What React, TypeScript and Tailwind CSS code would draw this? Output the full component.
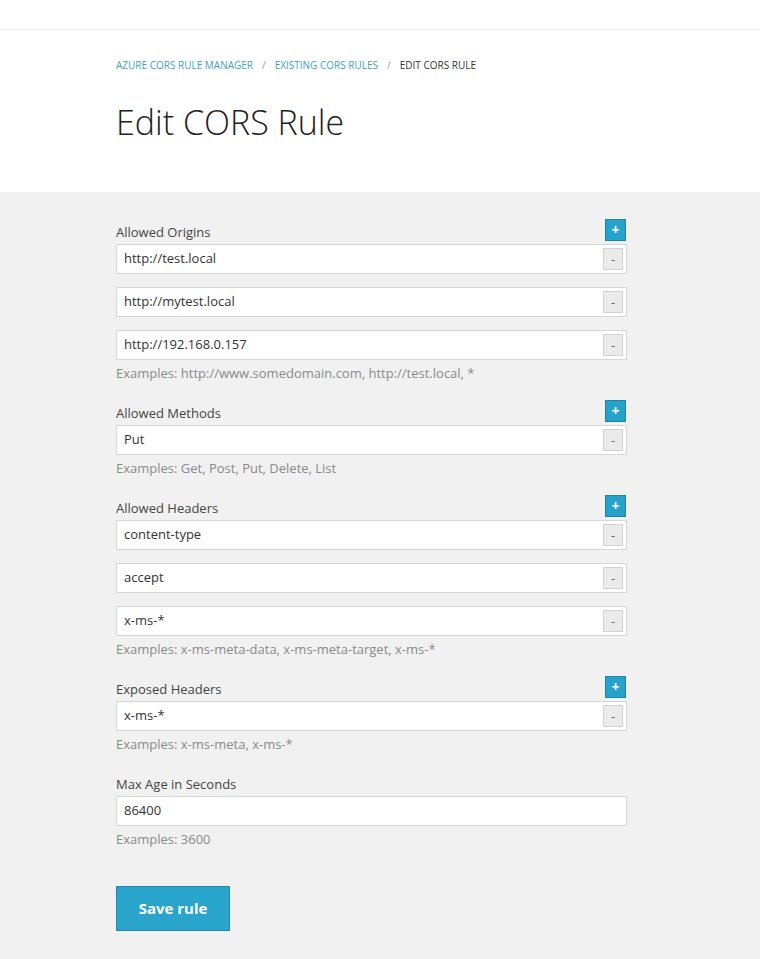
import React from 'react';

type Group = {
  label: string;
  values: string[];
  help: string;
  multi: boolean;
};

const groups: Group[] = [
  {
    label: 'Allowed Origins',
    values: ['http://test.local', 'http://mytest.local', 'http://192.168.0.157'],
    help: 'Examples: http://www.somedomain.com, http://test.local, *',
    multi: true,
  },
  {
    label: 'Allowed Methods',
    values: ['Put'],
    help: 'Examples: Get, Post, Put, Delete, List',
    multi: true,
  },
  {
    label: 'Allowed Headers',
    values: ['content-type', 'accept', 'x-ms-*'],
    help: 'Examples: x-ms-meta-data, x-ms-meta-target, x-ms-*',
    multi: true,
  },
  {
    label: 'Exposed Headers',
    values: ['x-ms-*'],
    help: 'Examples: x-ms-meta, x-ms-*',
    multi: true,
  },
  {
    label: 'Max Age in Seconds',
    values: ['86400'],
    help: 'Examples: 3600',
    multi: false,
  },
];

function Field({ value, removable }: { value: string; removable: boolean }) {
  return (
    <div className="flex h-[30px] items-center border border-[#d6d6d6] bg-white pl-[7px] pr-[3px]">
      <span className="flex-1 text-[13px] text-[#333]">{value}</span>
      {removable && (
        <button className="flex h-[22px] w-[20px] items-center justify-center border border-[#d2d2d2] bg-[#ebebeb] text-[13px] leading-none text-[#666]">
          -
        </button>
      )}
    </div>
  );
}

export default function App() {
  return (
    <div className="min-h-[959px] bg-[#f1f1f1] font-['Open_Sans',sans-serif]">
      <div className="h-[30px] border-b border-[#ebebeb] bg-white" />
      <div className="h-[162px] bg-white px-[116px] pt-[28px]">
        <nav className="flex items-center gap-[9px] text-[10px] uppercase">
          <span className="text-[#3d9fc4]">Azure CORS Rule Manager</span>
          <span className="text-[#999]">/</span>
          <span className="text-[#3d9fc4]">Existing CORS Rules</span>
          <span className="text-[#999]">/</span>
          <span className="text-[#333]">Edit CORS Rule</span>
        </nav>
        <h1 className="mt-[32px] text-[34px] font-light leading-none text-[#222]">Edit CORS Rule</h1>
      </div>

      <div className="w-[511px] ml-[116px] pt-[27px] pb-[28px]">
        {groups.map((g) => (
          <div key={g.label} className="mb-[18px]">
            <div className="flex h-[22px] items-end justify-between">
              <span className="text-[13px] leading-[18px] text-[#444]">{g.label}</span>
              {g.multi && (
                <button className="mr-[1px] flex h-[22px] w-[21px] items-center justify-center border border-[#1c84a5] bg-[#27a3cb] text-[14px] font-bold leading-none text-white">
                  +
                </button>
              )}
            </div>
            <div className="mt-[3px] flex flex-col gap-[13px]">
              {g.values.map((v) => (
                <Field key={v} value={v} removable={g.multi} />
              ))}
            </div>
            <p className="mt-[4px] text-[13px] leading-[18px] text-[#8a8a8a]">{g.help}</p>
          </div>
        ))}
        <button className="mt-[20px] h-[45px] w-[114px] border border-[#1f88ab] bg-[#29a5cc] text-[15px] font-bold text-white">
          Save rule
        </button>
      </div>
    </div>
  );
}
